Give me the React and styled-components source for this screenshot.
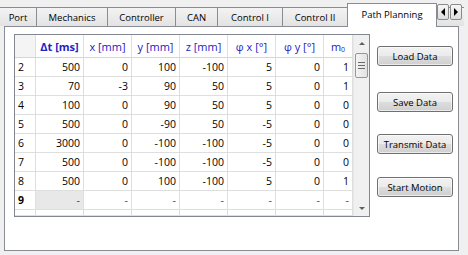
import React from 'react';
import styled, { createGlobalStyle } from 'styled-components';

const Global = createGlobalStyle`
  html, body { margin: 0; padding: 0; background: #f0f0f0; }
  body { font-family: "Open Sans", "Liberation Sans", sans-serif; color: #000; }
  * { box-sizing: border-box; }
`;

const Window = styled.div`
  width: 468px;
  height: 255px;
  overflow: hidden;
  background: #f0f0f0;
`;

const TabBar = styled.div`
  position: relative;
  z-index: 1;
  display: flex;
  align-items: flex-end;
  height: 27px;
  width: 464px;
  overflow: hidden;
`;

const Tab = styled.div`
  flex-shrink: 0;
  width: ${p => p.$w}px;
  height: ${p => (p.$active ? 24 : 19)}px;
  margin-bottom: ${p => (p.$active ? 0 : 1)}px;
  display: flex;
  align-items: center;
  justify-content: center;
  padding-bottom: ${p => (p.$active ? 3 : 0)}px;
  font-size: 9.5px;
  white-space: nowrap;
  color: #000;
  background: ${p => (p.$active ? '#fff' : 'linear-gradient(#f3f3f3, #e3e3e3)')};
  border-top: 1px solid #898c95;
  border-right: 1px solid #898c95;
  border-left: ${p => (p.$active ? '1px solid #898c95' : 'none')};
  margin-left: ${p => (p.$active ? -1 : 0)}px;
`;

const TabScroll = styled.div`
  position: absolute;
  top: 4px;
  right: 2px;
  display: flex;
  gap: 1px;
`;

const ScrollBtn = styled.div`
  width: 12px;
  height: 16px;
  border: 1px solid #8a8a8a;
  border-radius: 2px;
  background: linear-gradient(#f6f6f6, #dedede);
  display: flex;
  align-items: center;
  justify-content: center;
`;

const Pane = styled.div`
  margin-top: -1px;
  margin-left: 4px;
  width: 455px;
  height: 225px;
  border: 1px solid #898c95;
  background: #fff;
  display: flex;
  align-items: flex-start;
  gap: 7px;
  padding: 7px 0 0 9px;
`;

const Table = styled.div`
  width: 356px;
  height: 183px;
  border: 1px solid #828790;
  display: flex;
  background: #fff;
  flex-shrink: 0;
`;

const Grid = styled.div`
  flex: 1;
  display: flex;
  flex-direction: column;
  overflow: hidden;
`;

const Row = styled.div`
  display: flex;
  flex-shrink: 0;
  height: ${p => p.$h}px;
`;

const Cell = styled.div`
  flex-shrink: 0;
  width: ${p => p.$w}px;
  height: 100%;
  border-right: 1px solid #dedede;
  border-bottom: 1px solid #dedede;
  display: flex;
  align-items: center;
  justify-content: ${p => (p.$left ? 'flex-start' : 'flex-end')};
  padding: ${p => (p.$left ? '0 0 0 3px' : '0 3px 0 0')};
  font-size: 10.5px;
  font-weight: ${p => (p.$bold ? 700 : 400)};
  color: ${p => (p.$dim ? '#444' : '#000')};
  background: ${p => (p.$sel ? '#e8e8e8' : '#fff')};
`;

const HeadCell = styled.div`
  flex-shrink: 0;
  width: ${p => p.$w}px;
  height: 100%;
  border-right: 1px solid #dedede;
  border-bottom: 1px solid #d5d5d5;
  display: flex;
  align-items: center;
  justify-content: center;
  font-size: 11px;
  font-weight: ${p => (p.$bold ? 700 : 400)};
  color: #2222c4;
  background: ${p => (p.$corner ? '#f4f4f4' : '#fff')};
  white-space: nowrap;
  sub { font-size: 7px; vertical-align: -1px; }
`;

const ScrollBar = styled.div`
  width: 16px;
  flex-shrink: 0;
  display: flex;
  flex-direction: column;
  align-items: center;
  background: #f0f0f0;
  border-left: 1px solid #e8e8e8;
`;

const Arrow = styled.div`
  height: 16px;
  width: 100%;
  display: flex;
  align-items: center;
  justify-content: center;
  flex-shrink: 0;
`;

const Thumb = styled.div`
  width: 13px;
  height: 25px;
  margin-top: 2px;
  border: 1px solid #979797;
  border-radius: 2px;
  background: linear-gradient(90deg, #f4f4f4, #e2e2e2);
  display: flex;
  align-items: center;
  justify-content: center;
`;

const Track = styled.div`
  flex: 1;
`;

const Buttons = styled.div`
  display: flex;
  flex-direction: column;
`;

const Button = styled.button`
  width: 76px;
  height: 20px;
  margin-top: ${p => p.$mt}px;
  padding: 0;
  border: 1px solid #707070;
  border-radius: 3px;
  background: linear-gradient(#f2f2f2 0%, #ebebeb 48%, #dddddd 52%, #cfcfcf 100%);
  font-family: "Open Sans", "Liberation Sans", sans-serif;
  font-size: 9.5px;
  color: #000;
  box-shadow: inset 0 0 0 1px rgba(255,255,255,0.6);
`;

const cols = [
  { label: 'Δt [ms]', w: 48, bold: true },
  { label: 'x [mm]', w: 48 },
  { label: 'y [mm]', w: 48 },
  { label: 'z [mm]', w: 48 },
  { label: 'φ x [°]', w: 48 },
  { label: 'φ y [°]', w: 48 },
  { label: 'm0', w: 29 },
];

const rows = [
  [2, 500, 0, 100, -100, 5, 0, 1],
  [3, 70, -3, 90, 50, 5, 0, 1],
  [4, 100, 0, 90, 50, 5, 0, 0],
  [5, 500, 0, -90, 50, -5, 0, 0],
  [6, 3000, 0, -100, -100, -5, 0, 0],
  [7, 500, 0, -100, -100, -5, 0, 0],
  [8, 500, 0, 100, -100, 5, 0, 1],
  [9, '-', '-', '-', '-', '-', '-', '-'],
];

const tabs = [
  { label: 'Port', w: 37 },
  { label: 'Mechanics', w: 71 },
  { label: 'Controller', w: 68 },
  { label: 'CAN', w: 42 },
  { label: 'Control I', w: 65 },
  { label: 'Control II', w: 65 },
  { label: 'Path Planning', w: 90, active: true },
  { label: '', w: 70 },
];

const Tri = ({ dir, size = 4, color = '#000' }) => {
  const s = size;
  const pts = {
    left: `${s},0 ${s},${2 * s} 0,${s}`,
    right: `0,0 0,${2 * s} ${s},${s}`,
    up: `0,${s} ${2 * s},${s} ${s},0`,
    down: `0,0 ${2 * s},0 ${s},${s}`,
  }[dir];
  const vert = dir === 'up' || dir === 'down';
  return (
    <svg width={vert ? 2 * s : s} height={vert ? s : 2 * s} viewBox={`0 0 ${vert ? 2 * s : s} ${vert ? s : 2 * s}`}>
      <polygon points={pts} fill={color} />
    </svg>
  );
};

const Grip = () => (
  <svg width="7" height="7" viewBox="0 0 7 7">
    <rect x="0" y="0" width="7" height="1" fill="#6a6a6a" />
    <rect x="0" y="3" width="7" height="1" fill="#6a6a6a" />
    <rect x="0" y="6" width="7" height="1" fill="#6a6a6a" />
  </svg>
);

export default function App() {
  return (
    <Window>
      <Global />
      <TabBar>
        {tabs.map((t, i) => (
          <Tab key={i} $w={t.w} $active={t.active}>
            {t.label}
          </Tab>
        ))}
        <TabScroll>
          <ScrollBtn><Tri dir="left" /></ScrollBtn>
          <ScrollBtn><Tri dir="right" /></ScrollBtn>
        </TabScroll>
      </TabBar>
      <Pane>
        <Table>
          <Grid>
            <Row $h={23}>
              <HeadCell $w={21} $corner />
              {cols.map(c => (
                <HeadCell key={c.label} $w={c.w} $bold={c.bold}>
                  {c.label === 'm0' ? (<span>m<sub>0</sub></span>) : c.label}
                </HeadCell>
              ))}
            </Row>
            {rows.map(r => {
              const last = r[0] === 9;
              return (
                <Row key={r[0]} $h={19}>
                  <Cell $w={21} $left $bold={last}>{r[0]}</Cell>
                  {r.slice(1).map((v, i) => (
                    <Cell key={i} $w={cols[i].w} $sel={last && i === 0} $dim={last}>
                      {v}
                    </Cell>
                  ))}
                </Row>
              );
            })}
            <Row $h={6}>
              <Cell $w={21} />
              {cols.map((c, i) => (
                <Cell key={i} $w={c.w} />
              ))}
            </Row>
          </Grid>
          <ScrollBar>
            <Arrow><Tri dir="up" size={3} color="#606060" /></Arrow>
            <Thumb><Grip /></Thumb>
            <Track />
            <Arrow><Tri dir="down" size={3} color="#606060" /></Arrow>
          </ScrollBar>
        </Table>
        <Buttons>
          <Button $mt={12}>Load Data</Button>
          <Button $mt={26}>Save Data</Button>
          <Button $mt={22}>Transmit Data</Button>
          <Button $mt={23}>Start Motion</Button>
        </Buttons>
      </Pane>
    </Window>
  );
}
